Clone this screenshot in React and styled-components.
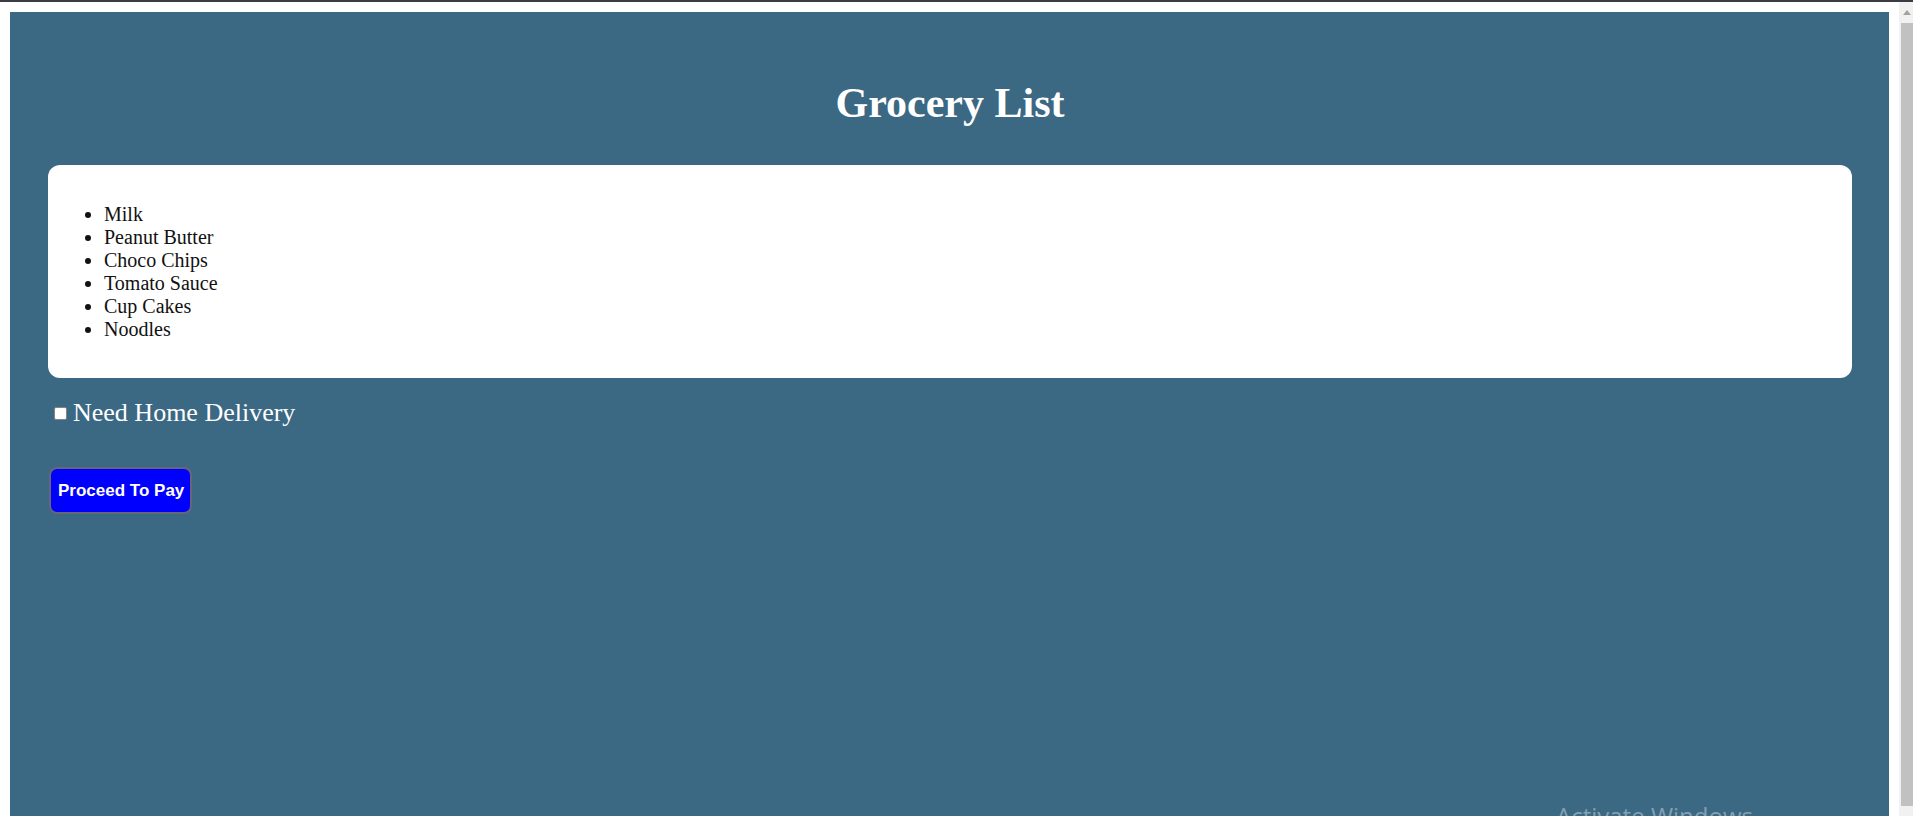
import React from "react";
import styled, { createGlobalStyle } from "styled-components";

const GlobalStyle = createGlobalStyle`
  html, body {
    margin: 0;
    padding: 0;
    height: 816px;
    overflow: hidden;
    background: #ffffff;
  }
  #root {
    height: 816px;
  }
`;

const Shell = styled.div`
  position: relative;
  height: 816px;
  display: flex;
  flex-direction: column;
  overflow: hidden;
`;

const TopStrip = styled.div`
  height: 2px;
  flex: none;
  background: #3a3b45;
`;

const Row = styled.div`
  flex: 1;
  display: flex;
  min-height: 0;
`;

const Viewport = styled.div`
  flex: 1;
  display: flex;
  flex-direction: column;
  padding: 10px 10px 0 10px;
  overflow: hidden;
`;

const Panel = styled.main`
  flex: 1;
  background: #3b6883;
  padding: 67px 37px 0 38px;
  font-family: "Liberation Serif", "Times New Roman", serif;
`;

const Title = styled.h1`
  margin: 0;
  text-align: center;
  font-size: 42px;
  font-weight: 700;
  color: #ffffff;
`;

const Card = styled.section`
  margin-top: 38px;
  background: #ffffff;
  border-radius: 12px;
  padding: 38px 0 37px 0;
`;

const List = styled.ul`
  margin: 0;
  padding-left: 56px;
  list-style: disc;
`;

const Item = styled.li`
  font-size: 20px;
  color: #111111;
`;

const Delivery = styled.label`
  margin-top: 20px;
  padding-left: 6px;
  display: flex;
  align-items: center;
  gap: 6px;
  font-size: 26px;
  color: #ffffff;
`;

const Check = styled.input`
  appearance: none;
  -webkit-appearance: none;
  margin: 0;
  width: 13px;
  height: 13px;
  box-sizing: border-box;
  border: 1px solid #858585;
  border-radius: 2px;
  background: #ffffff;
`;

const PayButton = styled.button`
  margin-top: 39px;
  margin-left: 1px;
  padding: 12px 6px 12px 7px;
  border: 2px solid #66667a;
  border-radius: 8px;
  background: #0000ff;
  color: #ffffff;
  font-family: "Liberation Sans", Arial, sans-serif;
  font-weight: 700;
  font-size: 17px;
  line-height: 19px;
  cursor: pointer;
`;

const Scrollbar = styled.div`
  width: 14px;
  flex: none;
  background: #f1f1f1;
  display: flex;
  flex-direction: column;
  align-items: flex-end;
`;

const ArrowUp = styled.div`
  height: 21px;
  width: 12px;
  display: flex;
  justify-content: center;
  align-items: center;
`;

const Thumb = styled.div`
  width: 12px;
  height: 783px;
  background: #c1c1c1;
`;

const Watermark = styled.div`
  position: absolute;
  left: 1556px;
  top: 804px;
  font-family: "Open Sans", "Noto Sans", sans-serif;
  font-size: 24px;
  line-height: 1;
  color: rgba(255, 255, 255, 0.38);
  white-space: nowrap;
  pointer-events: none;
`;

const items = ["Milk", "Peanut Butter", "Choco Chips", "Tomato Sauce", "Cup Cakes", "Noodles"];

export default function App() {
  return (
    <>
      <GlobalStyle />
      <Shell>
        <TopStrip />
        <Row>
          <Viewport>
            <Panel>
              <Title>Grocery List</Title>
              <Card>
                <List>
                  {items.map((it) => (
                    <Item key={it}>{it}</Item>
                  ))}
                </List>
              </Card>
              <Delivery>
                <Check type="checkbox" />
                Need Home Delivery
              </Delivery>
              <PayButton type="button">Proceed To Pay</PayButton>
            </Panel>
          </Viewport>
          <Scrollbar>
            <ArrowUp>
              <svg width="8" height="5" viewBox="0 0 8 5">
                <path d="M0 5 L4 0 L8 5 Z" fill="#a3a3a3" />
              </svg>
            </ArrowUp>
            <Thumb />
          </Scrollbar>
        </Row>
        <Watermark>Activate Windows</Watermark>
      </Shell>
    </>
  );
}
